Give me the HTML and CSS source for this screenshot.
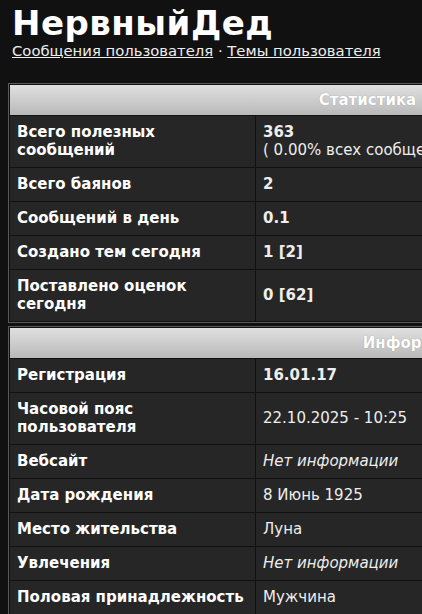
FILE: index.html
```html
<!DOCTYPE html>
<html lang="ru">
<head>
<meta charset="utf-8">
<title>НервныйДед</title>
<link rel="stylesheet" href="styles.css">
</head>
<body>
<div class="page">
  <div class="profile-head">
    <h1 class="nick">НервныйДед</h1>
    <div class="nav"><a href="#">Сообщения пользователя</a> · <a href="#">Темы пользователя</a></div>
  </div>

  <table class="forumline">
    <tr><th colspan="2">Статистика активности</th></tr>
    <tr><td class="label">Всего полезных сообщений</td><td class="value"><b>363</b><br>( 0.00% всех сообщений форума )</td></tr>
    <tr><td class="label">Всего баянов</td><td class="value"><b>2</b></td></tr>
    <tr><td class="label">Сообщений в день</td><td class="value"><b>0.1</b></td></tr>
    <tr><td class="label">Создано тем сегодня</td><td class="value"><b>1 [2]</b></td></tr>
    <tr><td class="label">Поставлено оценок сегодня</td><td class="value"><b>0 [62]</b></td></tr>
  </table>

  <table class="forumline">
    <tr><th colspan="2">Информация</th></tr>
    <tr><td class="label">Регистрация</td><td class="value"><b>16.01.17</b></td></tr>
    <tr><td class="label">Часовой пояс пользователя</td><td class="value">22.10.2025 - 10:25</td></tr>
    <tr><td class="label">Вебсайт</td><td class="value"><i>Нет информации</i></td></tr>
    <tr><td class="label">Дата рождения</td><td class="value">8 Июнь 1925</td></tr>
    <tr><td class="label">Место жительства</td><td class="value">Луна</td></tr>
    <tr><td class="label">Увлечения</td><td class="value"><i>Нет информации</i></td></tr>
    <tr><td class="label">Половая принадлежность</td><td class="value">Мужчина</td></tr>
  </table>
</div>
</body>
</html>
```

FILE: styles.css
```css
html, body {
  margin: 0;
  padding: 0;
  background: #111111;
  overflow: hidden;
}
body {
  font-family: "DejaVu Sans", Verdana, sans-serif;
  color: #eeeeee;
  font-size: 15px;
  line-height: 18px;
}
.page {
  padding: 4px 0 0 8px;
  width: 840px;
}
.profile-head {
  padding-left: 4px;
  margin-bottom: 23px;
}
.nick {
  margin: 0;
  font-size: 34px;
  line-height: 38px;
  letter-spacing: 0.5px;
  font-weight: bold;
  color: #ffffff;
}
.nav {
  font-size: 14.8px;
  line-height: 18px;
}
.nav a {
  color: #eeeeee;
  text-decoration: underline;
}
.forumline {
  width: 822px;
  border: 1px solid #5a5a5a;
  border-spacing: 1px;
  background: #111111;
  margin-bottom: 3px;
}
.forumline th {
  height: 18px;
  padding: 6px 7px;
  background: linear-gradient(#e0e0e0, #b9b9b9);
  color: #ffffff;
  font-weight: bold;
  text-align: center;
  text-shadow: 0 0 1px #888;
}
.forumline td {
  background: #262626;
  padding: 7px 7px 8px;
  vertical-align: middle;
}
.forumline .label {
  width: 231px;
  font-weight: bold;
  color: #ffffff;
}
.forumline .value {
  color: #eeeeee;
}
```
